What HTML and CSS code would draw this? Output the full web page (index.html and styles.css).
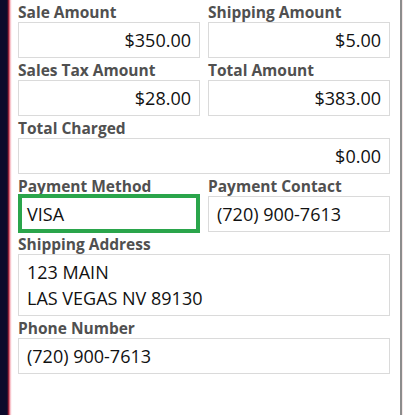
FILE: index.html
```html
<!DOCTYPE html>
<html>
<head>
<meta charset="utf-8">
<link rel="stylesheet" href="styles.css">
</head>
<body>
<div class="window">
  <div class="edge-left"></div>
  <div class="form">
    <div class="field">
      <div class="label">Sale Amount</div>
      <div class="box num">$350.00</div>
    </div>
    <div class="field">
      <div class="label">Shipping Amount</div>
      <div class="box num">$5.00</div>
    </div>
    <div class="field">
      <div class="label">Sales Tax Amount</div>
      <div class="box num">$28.00</div>
    </div>
    <div class="field">
      <div class="label">Total Amount</div>
      <div class="box num">$383.00</div>
    </div>
    <div class="field wide">
      <div class="label">Total Charged</div>
      <div class="box num">$0.00</div>
    </div>
    <div class="field">
      <div class="label">Payment Method</div>
      <div class="box focus">VISA</div>
    </div>
    <div class="field">
      <div class="label">Payment Contact</div>
      <div class="box">(720) 900-7613</div>
    </div>
    <div class="field wide">
      <div class="label">Shipping Address</div>
      <div class="box multi">123 MAIN<br>LAS VEGAS NV 89130</div>
    </div>
    <div class="field wide">
      <div class="label">Phone Number</div>
      <div class="box">(720) 900-7613</div>
    </div>
  </div>
  <div class="edge-right"></div>
</div>
</body>
</html>
```
FILE: styles.css
```css
html, body {
  margin: 0;
  padding: 0;
  background: #ffffff;
}
.window {
  display: flex;
  width: 403px;
  height: 415px;
  overflow: hidden;
  font-family: "Open Sans", "Noto Sans", sans-serif;
}
.edge-left {
  width: 12px;
  flex: none;
  background: linear-gradient(to right, #0b0a2b 0, #0b0a2b 7px, #5a1026 8px, #c8374f 9px, #f2a7b1 10px, #fde6ea 11px, #ffffff 12px);
}
.form {
  flex: 1;
  padding: 3px 0 0 6px;
  display: grid;
  grid-template-columns: 182px 182px;
  grid-auto-rows: min-content;
  column-gap: 8px;
  row-gap: 3px;
  align-content: start;
}
.field {
  display: flex;
  flex-direction: column;
}
.field.wide {
  grid-column: 1 / -1;
}
.label {
  font-weight: 700;
  font-size: 15.5px;
  line-height: 18px;
  color: #505050;
  margin-bottom: 1px;
  white-space: nowrap;
}
.box {
  box-sizing: border-box;
  height: 36px;
  border: 1px solid #dadada;
  background: #fff;
  font-size: 18px;
  line-height: 35px;
  color: #111;
  padding: 0 8px;
  white-space: nowrap;
}
.box.num {
  text-align: right;
}
.box.focus {
  position: relative;
  margin-top: -2px;
  margin-bottom: -1px;
  height: 39px;
  border: 4px solid #2aa54b;
  line-height: 32px;
  padding: 0 5px;
}
.box.multi {
  height: 62px;
  line-height: 25.5px;
  padding-top: 5px;
}
.edge-right {
  width: 3px;
  flex: none;
  background: linear-gradient(to right, #8c8c8c 0, #8c8c8c 2px, #f4e8e8 2px);
}
```
